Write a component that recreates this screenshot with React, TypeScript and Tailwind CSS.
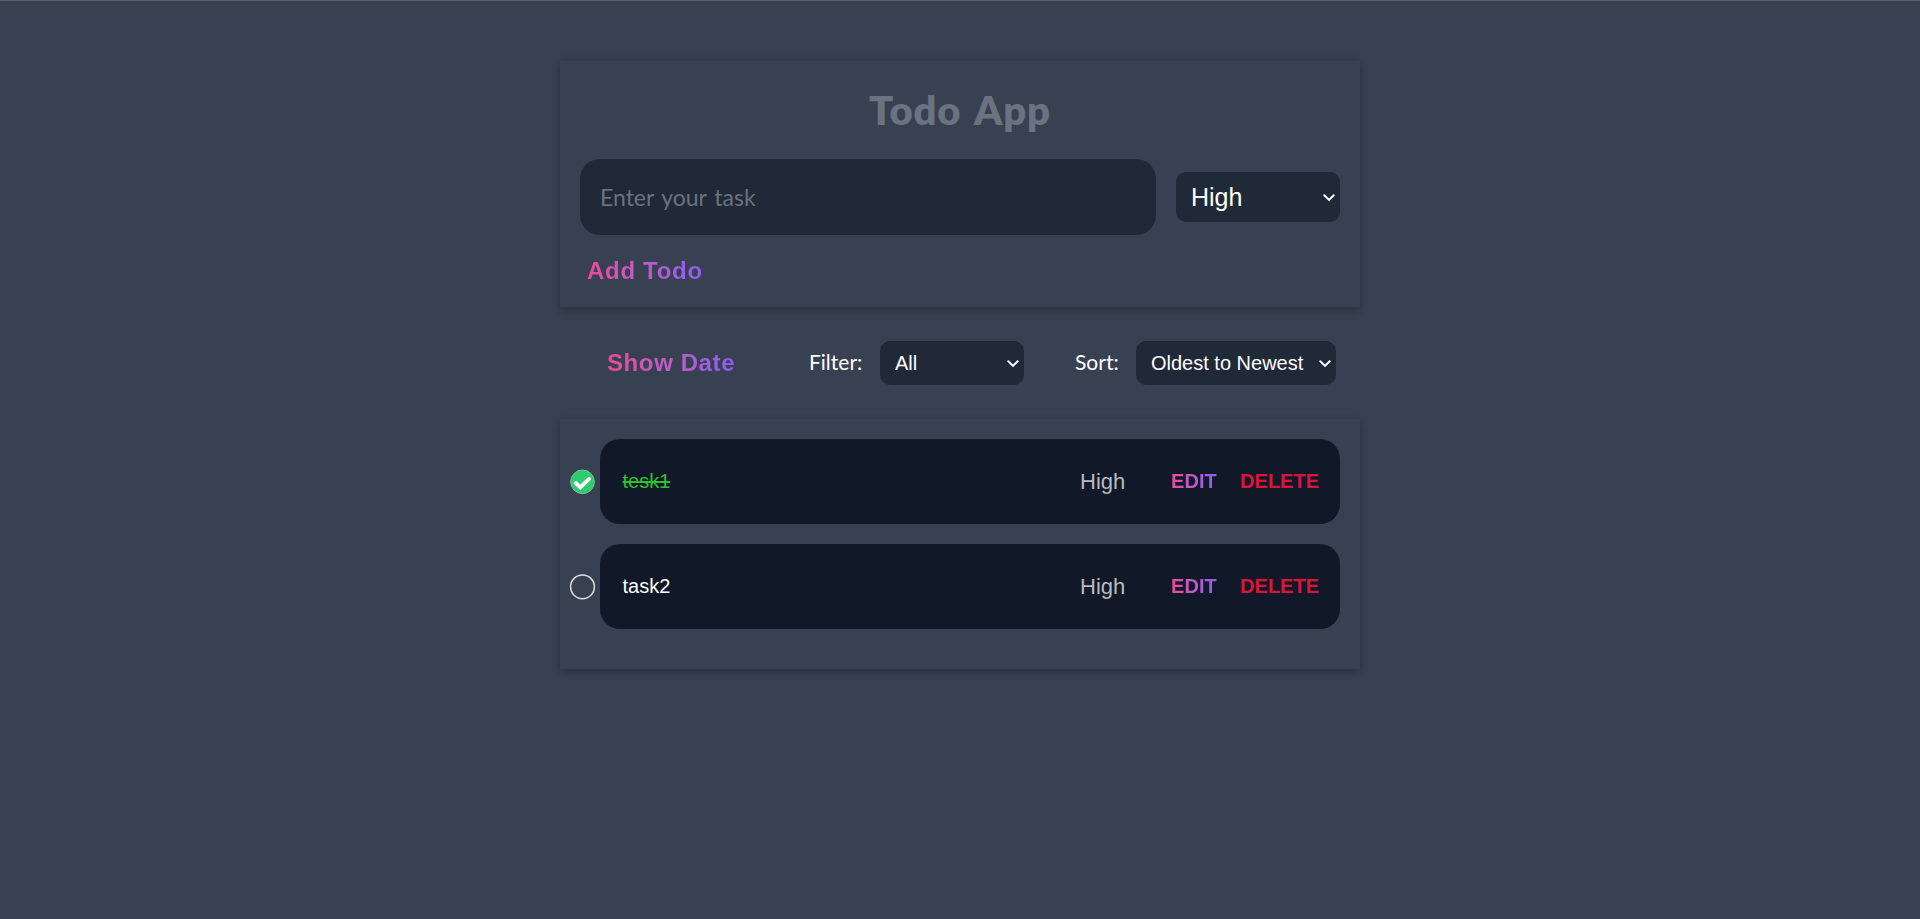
import { useState, type ReactNode } from "react";

type Todo = { id: number; text: string; priority: string; done: boolean };

const gradientText =
  "bg-gradient-to-r from-[#ec4899] to-[#8b5cf6] bg-clip-text font-bold text-transparent";
const cardShadow = "shadow-[0_4px_8px_rgba(0,0,0,0.16),0_0_8px_rgba(0,0,0,0.1)]";

function Select({ className, children }: { className: string; children: ReactNode }) {
  return (
    <div className="relative flex">
      <select
        className={`appearance-none rounded-[10px] border-0 bg-[#1f2937] text-white outline-none ${className}`}
      >
        {children}
      </select>
      <svg
        viewBox="0 0 12 8"
        className="pointer-events-none absolute top-1/2 right-[5px] mt-[-3px] h-2 w-3"
      >
        <path
          d="M1.3 1.2 L6 5.9 L10.7 1.2"
          fill="none"
          stroke="#fff"
          strokeWidth="2"
          strokeLinecap="round"
        />
      </svg>
    </div>
  );
}

function StatusIcon({ done }: { done: boolean }) {
  return (
    <svg viewBox="0 0 25 25" className="block size-[25px] overflow-visible">
      <circle
        cx="12.5"
        cy="12.8"
        r="11.9"
        fill={done ? "#2ecc71" : "none"}
        stroke={done ? "#8fc3a5" : "#dedede"}
        strokeWidth={done ? 0.8 : 1.5}
      />
      {done && (
        <path
          d="M5.7 14 L10.3 18.3 L19 9.8"
          fill="none"
          stroke="#fff"
          strokeWidth="3.9"
          strokeLinecap="round"
          strokeLinejoin="miter"
        />
      )}
    </svg>
  );
}

export default function App() {
  const [todos, setTodos] = useState<Todo[]>([
    { id: 1, text: "tesk1", priority: "High", done: true },
    { id: 2, text: "task2", priority: "High", done: false },
  ]);
  const toggle = (id: number) =>
    setTodos(todos.map((t) => (t.id === id ? { ...t, done: !t.done } : t)));

  return (
    <div className="h-[919px] overflow-hidden border-t border-[#5f6063] bg-[#374151] pt-[60px] font-['Liberation_Sans',Arial,sans-serif] text-white">
      <main className="mx-auto w-[800px]">
        <section className={`h-[246px] px-5 ${cardShadow}`}>
          <h1 className="pt-5 text-center font-['Lato',sans-serif] text-[40px] leading-[58px] font-extrabold tracking-[0.8px] text-[#6b7280] [word-spacing:4px]">
            Todo App
          </h1>
          <div className="mt-5 flex items-center gap-5">
            <input
              placeholder="Enter your task"
              className="h-[76px] w-[576px] rounded-[20px] bg-[#1f2937] px-5 font-['Lato',sans-serif] text-[23px] outline-none [word-spacing:2px] placeholder:text-[#6b7280]"
            />
            <Select className="h-[50px] w-[164px] pt-0.5 pl-[15px] text-[25px]">
              <option>High</option>
              <option>Medium</option>
              <option>Low</option>
            </Select>
          </div>
          <button
            className={`${gradientText} mt-[21px] ml-[7px] block text-[24px] leading-[30px] tracking-[0.7px]`}
          >
            Add Todo
          </button>
        </section>

        <div className="flex h-[112px] items-center pl-[47px]">
          <button className={`${gradientText} text-[24px] leading-[30px] tracking-[0.6px]`}>
            Show Date
          </button>
          <label className="ml-auto flex items-center">
            <span className="w-[71px] pb-0.5 font-['Lato',sans-serif] text-[21px]">Filter:</span>
            <Select className="h-11 w-36 pl-[15px] text-[20px]">
              <option>All</option>
              <option>Completed</option>
              <option>Active</option>
            </Select>
          </label>
          <label className="mr-6 ml-[51px] flex items-center">
            <span className="w-[61px] pb-0.5 font-['Lato',sans-serif] text-[21px]">Sort:</span>
            <Select className="h-11 w-[200px] pl-[15px] text-[20px]">
              <option>Oldest to Newest</option>
              <option>Newest to Oldest</option>
            </Select>
          </label>
        </div>

        <section className={`flex h-[250px] flex-col gap-5 pt-5 pr-5 pl-2.5 ${cardShadow}`}>
          {todos.map((todo) => (
            <div key={todo.id} className="flex h-[85px] items-center gap-[5px]">
              <button aria-label="Toggle" onClick={() => toggle(todo.id)}>
                <StatusIcon done={todo.done} />
              </button>
              <div className="flex h-full flex-1 items-center rounded-[20px] bg-[#111827] pr-[21px] pb-0.5 pl-[22.5px] text-[20px]">
                <span className={todo.done ? "text-[#2dc22d] line-through" : "text-white"}>
                  {todo.text}
                </span>
                <span className="ml-auto w-[91px] pt-px text-[22px] text-[#b8babe]">
                  {todo.priority}
                </span>
                <button className={`${gradientText} w-[46px] text-left`}>EDIT</button>
                <button className="ml-[23px] font-bold text-[#dc143c]">DELETE</button>
              </div>
            </div>
          ))}
        </section>
      </main>
    </div>
  );
}
